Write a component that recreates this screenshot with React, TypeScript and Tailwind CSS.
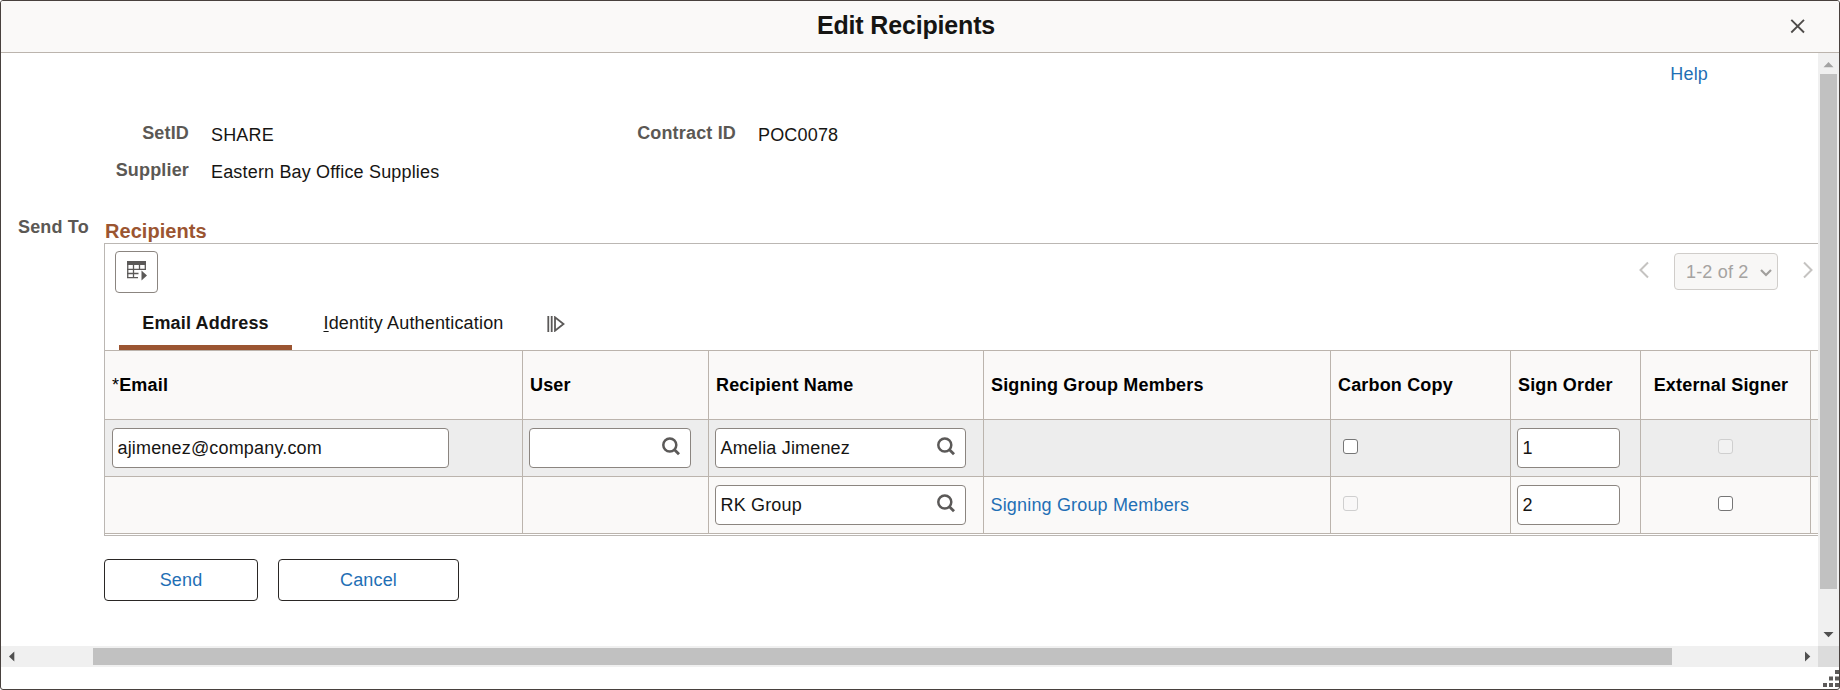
import { useState } from 'react'
import type { ReactNode } from 'react'
import { clsx } from 'clsx'

interface Recipient {
  id: number
  email?: string
  user?: string
  name: string
  groupLink?: boolean
  carbonCopy: boolean
  signOrder: string
  externalSigner: boolean
}

const recipients: Recipient[] = [
  {
    id: 1,
    email: 'ajimenez@company.com',
    user: '',
    name: 'Amelia Jimenez',
    carbonCopy: true,
    signOrder: '1',
    externalSigner: false,
  },
  { id: 2, name: 'RK Group', groupLink: true, carbonCopy: false, signOrder: '2', externalSigner: true },
]

const gridCols = 'grid grid-cols-[418px_186px_275px_347px_180px_130px_170px_8px]'

export default function App() {
  return (
    <div className="flex h-[690px] w-[1840px] flex-col overflow-hidden rounded-[3px] border border-[#48413e] bg-white font-['Liberation_Sans',Arial,sans-serif] text-[18px] leading-5 tracking-[0.17px] text-[#161513]">
      <header className="flex h-[52px] shrink-0 border-b border-[#bbb4ad] bg-[#faf9f8]">
        <div className="w-[53px]" />
        <h1 className="flex-1 pt-[9px] text-center text-[25px] leading-[30px] font-bold tracking-[-0.16px]">
          Edit Recipients
        </h1>
        <button className="mt-[17px] mr-[33px] ml-[32px] h-4 w-4" aria-label="Close">
          <svg viewBox="0 0 16 16" className="h-4 w-4" fill="none" stroke="#4f4d4b" strokeWidth="1.9">
            <path d="M1.300 1.800 14 14.500M14 1.800 1.300 14.500" />
          </svg>
        </button>
      </header>

      <div className="flex h-[593px] shrink-0">
        <main className="w-[1817px] overflow-hidden">
          <div className="flex h-[31px] items-end justify-end pr-[110px]">
            <a className="text-[#1f6fb5]">Help</a>
          </div>
          <div className="mt-[39px] flex">
            <Field label="SetID" value="SHARE" className="w-[547px]" labelClass="w-[188px]" />
            <Field label="Contract ID" value="POC0078" labelClass="w-[188px]" />
          </div>
          <div className="mt-[15px] flex">
            <Field label="Supplier" value="Eastern Bay Office Supplies" labelClass="w-[188px]" />
          </div>

          <div className="mt-[34px] flex">
            <div className="w-[103px] shrink-0 pt-[1px] pl-[17px] font-bold text-[#5b5854]">Send To</div>
            <section className="w-[1714px] pt-[3px]">
              <h2 className="h-6 pl-[1px] text-[20px] leading-6 font-bold tracking-[0.05px] text-[#9b5531]">Recipients</h2>
              <div className="h-[293px] border-y border-l border-[#bbb7b3]">
                <GridToolbar />
                <GridTabs />
                <RecipientGrid />
              </div>
              <div className="mt-[23px] flex gap-5">
                <ActionButton className="w-[154px]">Send</ActionButton>
                <ActionButton className="w-[181px]">Cancel</ActionButton>
              </div>
            </section>
          </div>
        </main>

        <div className="flex w-[21px] flex-col bg-[#f0f0f0] pl-[2px]">
          <svg viewBox="0 0 17 21" className="h-[21px] w-[17px]">
            <path d="M3.500 14.300h10L8.500 9z" fill="#a2a2a2" />
          </svg>
          <div className="h-[515px] w-[17px] bg-[#c1c1c1]" />
          <div className="flex-1" />
          <svg viewBox="0 0 17 21" className="h-[21px] w-[17px]">
            <path d="M3.500 7h10L8.500 12.300z" fill="#505050" />
          </svg>
        </div>
      </div>

      <div className="flex h-[21px] shrink-0 bg-[#f0f0f0]">
        <svg viewBox="0 0 92 21" className="h-[21px] w-[92px]">
          <path d="M13.300 5.500v10L8 10.500z" fill="#505050" />
        </svg>
        <div className="mt-[2px] h-[17px] w-[1579px] bg-[#c1c1c1]" />
        <svg viewBox="0 0 146 21" className="h-[21px] w-[146px]">
          <path d="M133 5.500v10L138.300 10.500z" fill="#505050" />
        </svg>
        <div className="h-[21px] w-[21px] bg-[#dcdcdc]" />
      </div>

      <div className="flex justify-end pt-[3px]">
        <svg viewBox="0 0 17 18" className="h-[18px] w-[17px]" fill="#5c5a59">
          <path d="M13 0h4v4h-4zM7 6.500h4v4H7zM13 6.500h4v4h-4zM1 13h4v4H1zM7 13h4v4H7zM13 13h4v4h-4z" />
        </svg>
      </div>
    </div>
  )
}

interface FieldProps {
  label: string
  value: string
  labelClass: string
  className?: string
}

function Field({ label, value, labelClass, className }: FieldProps) {
  return (
    <div className={clsx('flex h-[22px]', className)}>
      <div className={clsx('text-right font-bold text-[#5b5854]', labelClass)}>{label}</div>
      <div className="pt-[2px] pl-[22px] whitespace-nowrap">{value}</div>
    </div>
  )
}

function GridToolbar() {
  return (
    <div className="flex h-[49px] items-start justify-between pt-[7px] pl-[10px]">
      <button className="flex h-[42px] w-[43px] items-start rounded-[4px] border border-[#8b8580] pt-[9px] pl-[11px]" aria-label="Grid actions">
        <svg viewBox="0 0 20 20" className="h-5 w-5">
          <path d="M0 0h19v4H0z" fill="#5b5958" />
          <path
            d="M.75 3v14M6.500 4v13M12.500 4v5M18.300 4v5M0 8.400h19M0 12.500h11.500M0 16.700h11"
            fill="none"
            stroke="#5b5958"
            strokeWidth="1.3"
          />
          <path d="M14.500 9.500v10l5.500-5z" fill="#5b5958" />
        </svg>
      </button>
      <div className="flex">
        <svg viewBox="0 0 10 18" className="mt-[10px] mr-[25px] h-[18px] w-[10px]" fill="none" stroke="#c5c3c1" strokeWidth="2">
          <path d="M9 1.500 1.500 9 9 16.500" />
        </svg>
        <div className="mt-[2px] flex h-[37px] w-[104px] rounded-[4px] border border-[#d0cdca] bg-[#f8f7f6] pl-[11px] text-[#a5a3a1]">
          <span className="pt-[8px]">1-2 of 2</span>
          <svg viewBox="0 0 12 8" className="mt-[15px] ml-[12px] h-2 w-3 shrink-0" fill="none" stroke="#a19f9d" strokeWidth="2.2">
            <path d="M1 1 6 6l5-5" />
          </svg>
        </div>
        <svg viewBox="0 0 10 18" className="mt-[10px] mr-[5px] ml-[25px] h-[18px] w-[10px]" fill="none" stroke="#c5c3c1" strokeWidth="2">
          <path d="M1 1.500 8.500 9 1 16.500" />
        </svg>
      </div>
    </div>
  )
}

function GridTabs() {
  const [active, setActive] = useState('email')

  return (
    <div className="flex h-[57px] items-stretch pl-[14px]">
      <button
        onClick={() => setActive('email')}
        className={clsx('w-[173px] border-b-[5px] pt-[19px]', active === 'email' ? 'border-[#9b5531] font-bold' : 'border-transparent')}
      >
        <span className="block h-8">Email Address</span>
      </button>
      <button
        onClick={() => setActive('identity')}
        className={clsx('ml-[8px] w-[227px] border-b-[5px] pt-[19px]', active === 'identity' ? 'border-[#9b5531] font-bold' : 'border-transparent')}
      >
        <span className="block h-8">
          <span className="underline decoration-1 underline-offset-2">I</span>dentity Authentication
        </span>
      </button>
      <svg viewBox="0 0 18 16" className="mt-[23px] ml-[20px] h-4 w-[18px]" fill="none" stroke="#5b5958" strokeWidth="1.8">
        <path d="M1.300 0v16M4.700 0v16M8 1.300v13.400L16.500 8z" />
      </svg>
    </div>
  )
}

function RecipientGrid() {
  return (
    <div className="h-[184px] border-y border-[#bbb4ad]">
      <div className={clsx(gridCols, 'h-[68px] bg-[#faf9f8] font-bold text-black')}>
        <HeaderCell>
          <span className="font-normal">*</span>Email
        </HeaderCell>
        <HeaderCell>User</HeaderCell>
        <HeaderCell>Recipient Name</HeaderCell>
        <HeaderCell>Signing Group Members</HeaderCell>
        <HeaderCell>Carbon Copy</HeaderCell>
        <HeaderCell>Sign Order</HeaderCell>
        <HeaderCell center>External Signer</HeaderCell>
      </div>
      {recipients.map((r, i) => (
        <div
          key={r.id}
          className={clsx(gridCols, 'h-[57px] border-t border-[#bbb4ad]', i % 2 === 0 ? 'bg-[#ededed]' : 'bg-[#faf9f8]')}
        >
          <Cell>{r.email !== undefined && <TextBox value={r.email} className="ml-[1px] w-[337px]" />}</Cell>
          <Cell>{r.user !== undefined && <TextBox value={r.user} lookup className="w-[162px]" />}</Cell>
          <Cell>
            <TextBox value={r.name} lookup className="w-[251px]" />
          </Cell>
          <Cell>{r.groupLink && <a className="pt-[10px] pl-[0.500px] text-[#1f6fb5]">Signing Group Members</a>}</Cell>
          <Cell>
            <CheckBox enabled={r.carbonCopy} className="ml-[6px]" />
          </Cell>
          <Cell>
            <TextBox value={r.signOrder} className="w-[103px]" />
          </Cell>
          <Cell>
            <CheckBox enabled={r.externalSigner} className="ml-[71px]" />
          </Cell>
        </div>
      ))}
    </div>
  )
}

function HeaderCell({ children, center }: { children: ReactNode; center?: boolean }) {
  return (
    <div className={clsx('border-r border-[#bbb4ad] pt-[24px]', center ? 'pr-[9px] text-center' : 'pl-[7px]')}>
      {children}
    </div>
  )
}

function Cell({ children }: { children?: ReactNode }) {
  return <div className="flex items-start border-r border-[#bbb4ad] pt-[8px] pl-[6px]">{children}</div>
}

interface TextBoxProps {
  value: string
  className?: string
  lookup?: boolean
}

function TextBox({ value, className, lookup }: TextBoxProps) {
  return (
    <div className={clsx('flex h-10 justify-between rounded-[4px] border border-[#8b8580] bg-white pl-[4.500px]', className)}>
      <span className="pt-[9px]">{value}</span>
      {lookup && (
        <svg viewBox="0 0 20 20" className="mt-[8px] mr-[9px] h-5 w-5" fill="none" stroke="#5b5958">
          <circle cx="8.800" cy="8" r="6.500" strokeWidth="2.500" />
          <path d="m13 12.300 5 5" strokeWidth="2.800" />
        </svg>
      )}
    </div>
  )
}

function CheckBox({ enabled, className }: { enabled: boolean; className?: string }) {
  return (
    <span
      className={clsx(
        'mt-[11px] h-[15px] w-[15px] rounded-[3px] border',
        enabled ? 'border-[#767676] bg-white' : 'border-[#cfcfcf] bg-[#f8f8f8]/50',
        className,
      )}
    />
  )
}

function ActionButton({ children, className }: { children: ReactNode; className?: string }) {
  return (
    <button className={clsx('h-[42px] rounded-[4px] border border-[#2a2725] bg-white pb-[1px] text-[#1f6fb5]', className)}>
      {children}
    </button>
  )
}
